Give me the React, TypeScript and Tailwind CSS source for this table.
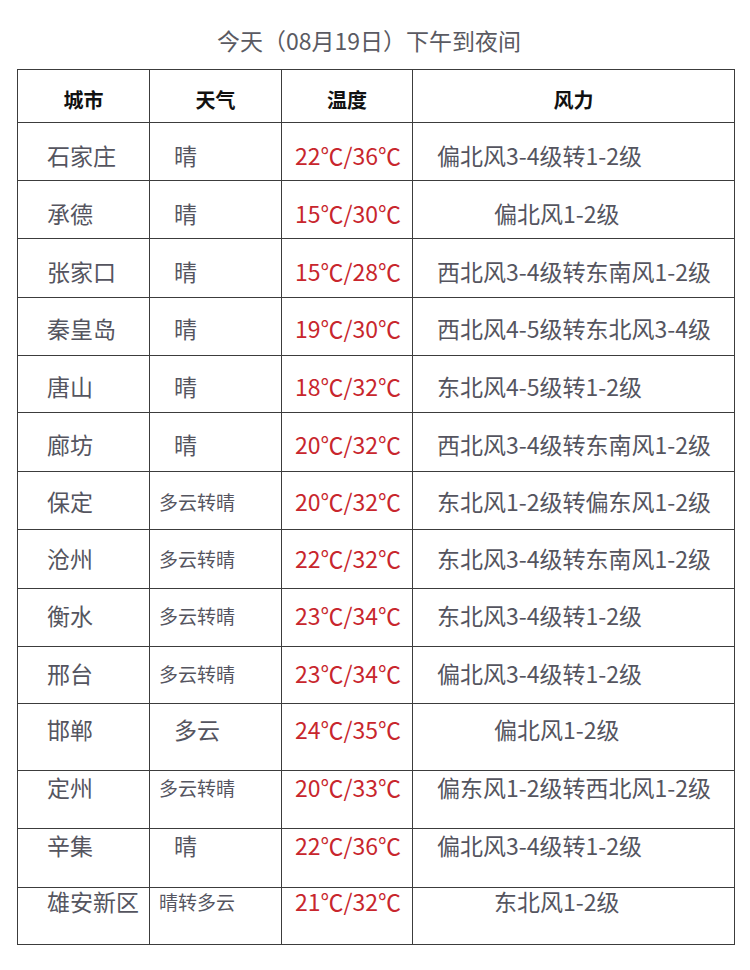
import React from "react";

type Row = {
  city: string;
  weather: string;
  small: boolean;
  wpl: string;
  temp: string;
  wind: string;
  indent: boolean;
  h: string;
  pt: string;
};

const rows: Row[] = [
  { city: "石家庄", weather: "晴", small: false, wpl: "pl-[24px]", temp: "22℃/36℃", wind: "偏北风3-4级转1-2级", indent: false, h: "h-[58px]", pt: "pt-[21px]" },
  { city: "承德", weather: "晴", small: false, wpl: "pl-[24px]", temp: "15℃/30℃", wind: "偏北风1-2级", indent: true, h: "h-[58px]", pt: "pt-[21px]" },
  { city: "张家口", weather: "晴", small: false, wpl: "pl-[24px]", temp: "15℃/28℃", wind: "西北风3-4级转东南风1-2级", indent: false, h: "h-[59px]", pt: "pt-[21px]" },
  { city: "秦皇岛", weather: "晴", small: false, wpl: "pl-[24px]", temp: "19℃/30℃", wind: "西北风4-5级转东北风3-4级", indent: false, h: "h-[58px]", pt: "pt-[19px]" },
  { city: "唐山", weather: "晴", small: false, wpl: "pl-[24px]", temp: "18℃/32℃", wind: "东北风4-5级转1-2级", indent: false, h: "h-[57px]", pt: "pt-[19px]" },
  { city: "廊坊", weather: "晴", small: false, wpl: "pl-[24px]", temp: "20℃/32℃", wind: "西北风3-4级转东南风1-2级", indent: false, h: "h-[59px]", pt: "pt-[20px]" },
  { city: "保定", weather: "多云转晴", small: true, wpl: "pl-[9px]", temp: "20℃/32℃", wind: "东北风1-2级转偏东风1-2级", indent: false, h: "h-[58px]", pt: "pt-[18px]" },
  { city: "沧州", weather: "多云转晴", small: true, wpl: "pl-[9px]", temp: "22℃/32℃", wind: "东北风3-4级转东南风1-2级", indent: false, h: "h-[59px]", pt: "pt-[17px]" },
  { city: "衡水", weather: "多云转晴", small: true, wpl: "pl-[9px]", temp: "23℃/34℃", wind: "东北风3-4级转1-2级", indent: false, h: "h-[58px]", pt: "pt-[15px]" },
  { city: "邢台", weather: "多云转晴", small: true, wpl: "pl-[9px]", temp: "23℃/34℃", wind: "偏北风3-4级转1-2级", indent: false, h: "h-[57px]", pt: "pt-[15px]" },
  { city: "邯郸", weather: "多云", small: false, wpl: "pl-[24px]", temp: "24℃/35℃", wind: "偏北风1-2级", indent: true, h: "h-[67px]", pt: "pt-[14px]" },
  { city: "定州", weather: "多云转晴", small: true, wpl: "pl-[9px]", temp: "20℃/33℃", wind: "偏东风1-2级转西北风1-2级", indent: false, h: "h-[58px]", pt: "pt-[5px]" },
  { city: "辛集", weather: "晴", small: false, wpl: "pl-[24px]", temp: "22℃/36℃", wind: "偏北风3-4级转1-2级", indent: false, h: "h-[59px]", pt: "pt-[5px]" },
  { city: "雄安新区", weather: "晴转多云", small: true, wpl: "pl-[9px]", temp: "21℃/32℃", wind: "东北风1-2级", indent: true, h: "h-[57px]", pt: "pt-[2px]" },
];

const font = "font-['Noto_Sans_CJK_SC','Noto_Sans',sans-serif]";

export default function App() {
  return (
    <div className={`w-[750px] h-[970px] bg-white ${font}`}>
      <div className="h-[69px] pt-[29px] pr-[12px] text-center text-[23px] leading-[23px] text-[#5a5a62]">
        今天（08月19日）下午到夜间
      </div>
      <div className="ml-[17px] w-[718px] border-l border-t border-[#3c3c3c]">
        <div className="grid grid-cols-[132px_132px_131px_322px] h-[53px]">
          {["城市", "天气", "温度", "风力"].map((t) => (
            <div
              key={t}
              className="border-r border-b border-[#3c3c3c] pt-[20px] text-center text-[20px] leading-[20px] font-semibold text-[#111111]"
            >
              {t}
            </div>
          ))}
        </div>
        {rows.map((r) => (
          <div key={r.city} className={`grid grid-cols-[132px_132px_131px_322px] ${r.h}`}>
            <div className={`border-r border-b border-[#3c3c3c] pl-[29px] ${r.pt} text-[23px] leading-[23px] text-[#55555f]`}>
              {r.city}
            </div>
            <div
              className={`border-r border-b border-[#3c3c3c] ${r.wpl} ${r.pt} leading-[23px] text-[#55555f] ${
                r.small ? "text-[19px]" : "text-[23px]"
              }`}
            >
              {r.weather}
            </div>
            <div className={`border-r border-b border-[#3c3c3c] pl-[13px] ${r.pt} text-[23px] leading-[23px] text-[#c8262d]`}>
              {r.temp}
            </div>
            <div
              className={`border-r border-b border-[#3c3c3c] ${r.pt} text-[23px] leading-[23px] text-[#55555f] ${
                r.indent ? "pl-[81px]" : "pl-[24px]"
              }`}
            >
              {r.wind}
            </div>
          </div>
        ))}
      </div>
    </div>
  );
}
